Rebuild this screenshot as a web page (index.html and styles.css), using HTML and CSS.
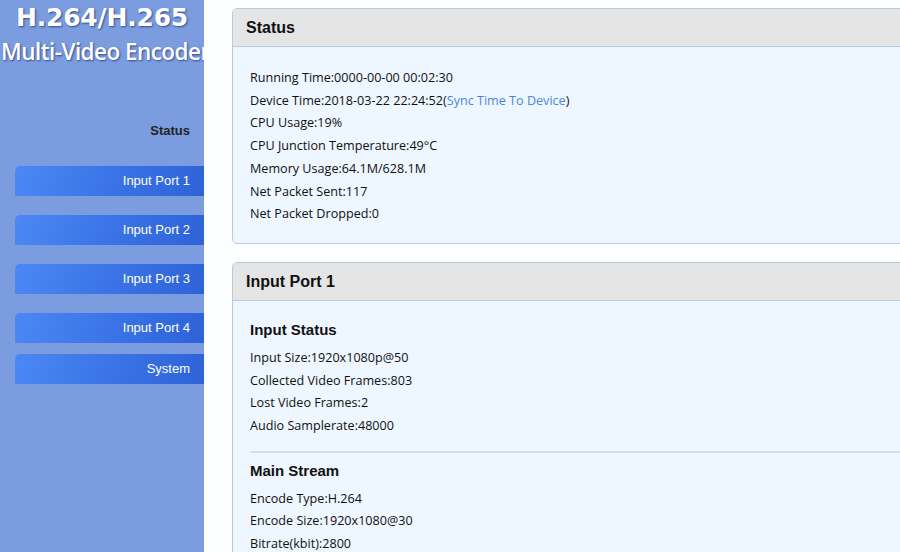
FILE: index.html
```html
<!DOCTYPE html>
<html lang="en">
<head>
    <meta charset="UTF-8">
    <meta name="viewport" content="width=device-width, initial-scale=1.0">
    <title>H.264/H.265 Multi-Video Encoder</title>
    <link rel="stylesheet" href="styles.css">
</head>
<body>
    <aside class="sidebar">
        <div class="logo">
            <div class="logo-main">H.264/H.265</div>
            <div class="logo-sub">Multi-Video Encoder</div>
        </div>
        <nav class="menu">
            <a class="menu-current" href="#status">Status</a>
            <a class="menu-item" href="#port1">Input Port 1</a>
            <a class="menu-item" href="#port2">Input Port 2</a>
            <a class="menu-item" href="#port3">Input Port 3</a>
            <a class="menu-item" href="#port4">Input Port 4</a>
            <a class="menu-item system" href="#system">System</a>
        </nav>
    </aside>

    <main class="content">
        <section class="panel" id="status">
            <div class="panel-title">Status</div>
            <div class="panel-body">
                <p>Running Time:0000-00-00 00:02:30</p>
                <p>Device Time:2018-03-22 22:24:52(<a href="#" class="sync">Sync Time To Device</a>)</p>
                <p>CPU Usage:19%</p>
                <p>CPU Junction Temperature:49°C</p>
                <p>Memory Usage:64.1M/628.1M</p>
                <p>Net Packet Sent:117</p>
                <p>Net Packet Dropped:0</p>
            </div>
        </section>

        <section class="panel" id="port1">
            <div class="panel-title">Input Port 1</div>
            <div class="panel-body">
                <h3>Input Status</h3>
                <p>Input Size:1920x1080p@50</p>
                <p>Collected Video Frames:803</p>
                <p>Lost Video Frames:2</p>
                <p>Audio Samplerate:48000</p>
                <hr>
                <h3>Main Stream</h3>
                <p>Encode Type:H.264</p>
                <p>Encode Size:1920x1080@30</p>
                <p>Bitrate(kbit):2800</p>
            </div>
        </section>
    </main>
</body>
</html>
```

FILE: styles.css
```css
* {
    box-sizing: border-box;
}

body {
    margin: 0;
    height: 100vh;
    display: flex;
    overflow: hidden;
    font-family: "Open Sans", "Noto Sans", sans-serif;
    color: #111;
}

/* left menu */
.sidebar {
    width: 204px;
    flex-shrink: 0;
    background: #7b9de0;
    overflow: hidden;
}

.logo {
    color: #fff;
    text-align: center;
    text-shadow: 1px 1px 2px rgba(20, 40, 110, 0.7);
    white-space: nowrap;
}

.logo-main {
    font-family: "DejaVu Sans", sans-serif;
    font-weight: bold;
    font-size: 25px;
    line-height: 32px;
    padding-top: 2px;
    letter-spacing: -0.2px;
}

.logo-sub {
    font-family: "Open Sans", sans-serif;
    font-weight: 600;
    font-size: 22.5px;
    line-height: 36px;
    letter-spacing: -0.55px;
    margin-left: 1px;
    text-align: left;
}

.menu {
    display: flex;
    flex-direction: column;
    padding-left: 15px;
    margin-top: 46px;
}

.menu a {
    font-family: "Liberation Sans", Arial, sans-serif;
    font-size: 13px;
    text-decoration: none;
    text-align: right;
    padding-right: 14px;
}

.menu-current {
    color: #222;
    font-weight: bold;
    line-height: 30px;
    margin-bottom: 20px;
}

.menu-item {
    color: #fff;
    height: 30px;
    line-height: 30px;
    margin-bottom: 19px;
    border-top-left-radius: 5px;
    background: linear-gradient(100deg, #4c88f4 0%, #3a74e6 50%, #2e63d8 100%);
}

.menu-item:nth-child(5) {
    margin-bottom: 11px;
}

/* right side */
.content {
    flex: 1;
    background: #fcfeff;
    padding: 8px 0 0 28px;
    overflow: hidden;
}

.panel {
    width: 720px;
    border: 1px solid #b9c9de;
    border-radius: 5px;
    background: #eef6ff;
    margin-bottom: 18px;
}

.panel-title {
    height: 38px;
    line-height: 37px;
    padding-left: 13px;
    background: #e5e5e5;
    border-bottom: 1px solid #b9c9de;
    border-radius: 5px 5px 0 0;
    font-family: "Liberation Sans", Arial, sans-serif;
    font-weight: bold;
    font-size: 16px;
}

.panel-body {
    padding: 20px 17px 17px;
    font-size: 12.6px;
}

.panel-body p {
    margin: 0;
    line-height: 22.7px;
}

.panel-body h3 {
    margin: -1px 0 7px;
    font-family: "Liberation Sans", Arial, sans-serif;
    font-size: 15px;
    line-height: 20px;
}

.panel-body hr {
    border: none;
    border-top: 2px solid #d7dde5;
    margin: 13px 0 9px;
}

.sync {
    color: #4a86e0;
    text-decoration: none;
}
```
